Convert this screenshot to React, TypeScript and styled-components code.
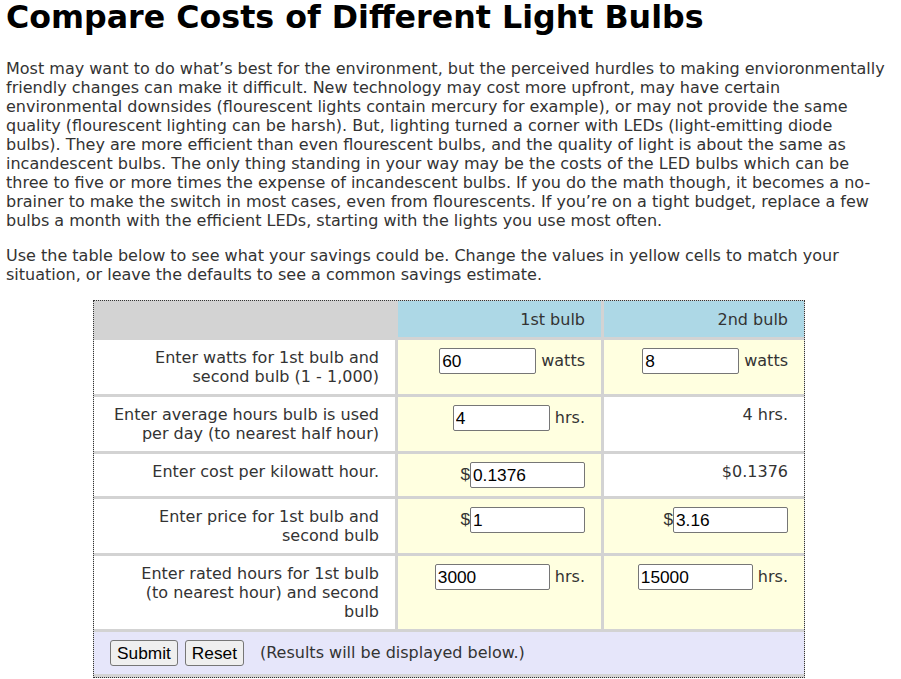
import React from "react";
import styled, { createGlobalStyle } from "styled-components";

const GlobalStyle = createGlobalStyle`
  html, body { margin: 0; padding: 0; background: #fff; }
  body {
    font-family: "DejaVu Sans", Verdana, sans-serif;
    font-size: 16px;
    color: #333;
  }
`;

const Page = styled.div`
  padding: 0 6px;
`;

const Title = styled.h1`
  margin: 0;
  font-size: 31.7px;
  line-height: 34px;
  font-weight: bold;
  color: #000;
`;

const Para = styled.p`
  margin: 25px 0 16px;
  max-width: 881px;
  line-height: 19px;
  & + & { margin-top: 16px; }
`;

const Calc = styled.div`
  width: 712px;
  box-sizing: border-box;
  margin: 0 0 0 87px;
  border: 1px dotted #333;
  background: #d3d3d3;
  display: grid;
  grid-template-columns: 301px 203px 200px;
  gap: 3px;
  padding-bottom: 3px;
`;

const Cell = styled.div<{ $bg?: string; $span?: number; $left?: boolean }>`
  background: ${(p) => p.$bg || "#fff"};
  padding: 8px 16px;
  line-height: 19px;
  text-align: ${(p) => (p.$left ? "left" : "right")};
  grid-column: ${(p) => (p.$span ? `span ${p.$span}` : "auto")};
`;

const HeadCell = styled(Cell)`
  padding-top: 9px;
`;

const Field = styled.input<{ $w: number }>`
  width: ${(p) => p.$w}px;
  height: 26px;
  box-sizing: border-box;
  border: 1px solid #767676;
  border-radius: 2px;
  padding: 1px 2px;
  font-family: "Liberation Sans", Arial, sans-serif;
  font-size: 17.3px;
  color: #000;
  background: #fff;
  vertical-align: -1px;
`;

const Dollar = styled.span`
  font-family: "Liberation Sans", Arial, sans-serif;
  font-size: 17.3px;
`;

const Btn = styled.button`
  height: 26px;
  font-family: "Liberation Sans", Arial, sans-serif;
  font-size: 17.3px;
  color: #000;
  background: #efefef;
  border: 1px solid #767676;
  border-radius: 3px;
  padding: 1px 6px;
  margin-right: 7px;
  vertical-align: -1px;
`;

const Note = styled.span`
  margin-left: 9px;
`;

const GRAY = "#d3d3d3";
const BLUE = "#add8e6";
const YELLOW = "#ffffe0";
const LAV = "#e6e6fa";

export default function App() {
  return (
    <Page>
      <GlobalStyle />
      <Title>Compare Costs of Different Light Bulbs</Title>
      <Para>
        Most may want to do what’s best for the environment, but the perceived hurdles to making envioronmentally
        friendly changes can make it difficult. New technology may cost more upfront, may have certain
        environmental downsides (flourescent lights contain mercury for example), or may not provide the same
        quality (flourescent lighting can be harsh). But, lighting turned a corner with LEDs (light-emitting diode
        bulbs). They are more efficient than even flourescent bulbs, and the quality of light is about the same as
        incandescent bulbs. The only thing standing in your way may be the costs of the LED bulbs which can be
        three to five or more times the expense of incandescent bulbs. If you do the math though, it becomes a no-brainer
        to make the switch in most cases, even from flourescents. If you’re on a tight budget, replace a few
        bulbs a month with the efficient LEDs, starting with the lights you use most often.
      </Para>
      <Para>
        Use the table below to see what your savings could be. Change the values in yellow cells to match your
        situation, or leave the defaults to see a common savings estimate.
      </Para>
      <Calc>
        <HeadCell $bg={GRAY}>&nbsp;</HeadCell>
        <HeadCell $bg={BLUE}>1st bulb</HeadCell>
        <HeadCell $bg={BLUE}>2nd bulb</HeadCell>

        <Cell>Enter watts for 1st bulb and second bulb (1 - 1,000)</Cell>
        <Cell $bg={YELLOW}>
          <Field $w={97} defaultValue="60" /> watts
        </Cell>
        <Cell $bg={YELLOW}>
          <Field $w={97} defaultValue="8" /> watts
        </Cell>

        <Cell>Enter average hours bulb is used per day (to nearest half hour)</Cell>
        <Cell $bg={YELLOW}>
          <Field $w={97} defaultValue="4" /> hrs.
        </Cell>
        <Cell>4 hrs.</Cell>

        <Cell>Enter cost per kilowatt hour.</Cell>
        <Cell $bg={YELLOW}>
          <Dollar>$</Dollar>
          <Field $w={115} defaultValue="0.1376" />
        </Cell>
        <Cell>$0.1376</Cell>

        <Cell>Enter price for 1st bulb and second bulb</Cell>
        <Cell $bg={YELLOW}>
          <Dollar>$</Dollar>
          <Field $w={115} defaultValue="1" />
        </Cell>
        <Cell $bg={YELLOW}>
          <Dollar>$</Dollar>
          <Field $w={115} defaultValue="3.16" />
        </Cell>

        <Cell>
          Enter rated hours for 1st bulb
          <br />
          (to nearest hour) and second bulb
        </Cell>
        <Cell $bg={YELLOW}>
          <Field $w={115} defaultValue="3000" /> hrs.
        </Cell>
        <Cell $bg={YELLOW}>
          <Field $w={115} defaultValue="15000" /> hrs.
        </Cell>

        <Cell $bg={LAV} $span={3} $left>
          <Btn type="button">Submit</Btn>
          <Btn type="button">Reset</Btn>
          <Note>(Results will be displayed below.)</Note>
        </Cell>
      </Calc>
    </Page>
  );
}
